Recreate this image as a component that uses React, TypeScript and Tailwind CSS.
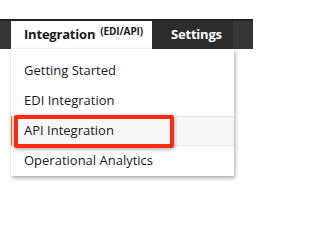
const items = ["Getting Started", "EDI Integration", "API Integration", "Operational Analytics"];

export default function App() {
  return (
    <div className="w-[253px] h-[203px] bg-white pt-[19px] relative" style={{ fontFamily: '"Open Sans", "Noto Sans", sans-serif' }}>
      <div className="h-[30px] bg-[#363636] border-t-2 border-[#222] flex items-end pl-[11px]">
        <div className="w-[141px] h-[28px] bg-white flex items-center pl-[13px] text-[#16191f]">
          <span className="text-[13px] font-bold tracking-[-0.2px]">Integration</span>
          <sup className="text-[10px] font-bold ml-[5px] -top-[4px] tracking-[-0.1px]">(EDI/API)</sup>
        </div>
        <div className="w-[81px] h-[28px] bg-[#2c2c2c] flex items-center pl-[19px] text-white text-[13px] font-bold tracking-[-0.2px]">
          Settings
        </div>
      </div>

      <div className="absolute left-[11px] top-[49px] w-[223px] bg-white pt-[7px] shadow-[1px_2px_4px_rgba(0,0,0,0.35)]">
        {items.map((label) => {
          const active = label === "API Integration";
          return (
            <div
              key={label}
              className={
                active
                  ? "relative h-[30px] flex items-center pl-[12px] text-[13px] text-[#16191f] bg-[#f7f7f7] border-y border-[#e7e7e7] border-l border-l-[#ec7211]"
                  : "h-[30px] flex items-center pl-[13px] text-[13px] text-[#16191f]"
              }
            >
              {label}
              {active && (
                <div className="absolute left-[2px] -top-[2px] w-[160px] h-[33px] border-[4px] border-[#ff2a12] rounded-[2px] shadow-[0_1px_4px_rgba(0,0,0,0.4)]" />
              )}
            </div>
          );
        })}
      </div>
    </div>
  );
}
